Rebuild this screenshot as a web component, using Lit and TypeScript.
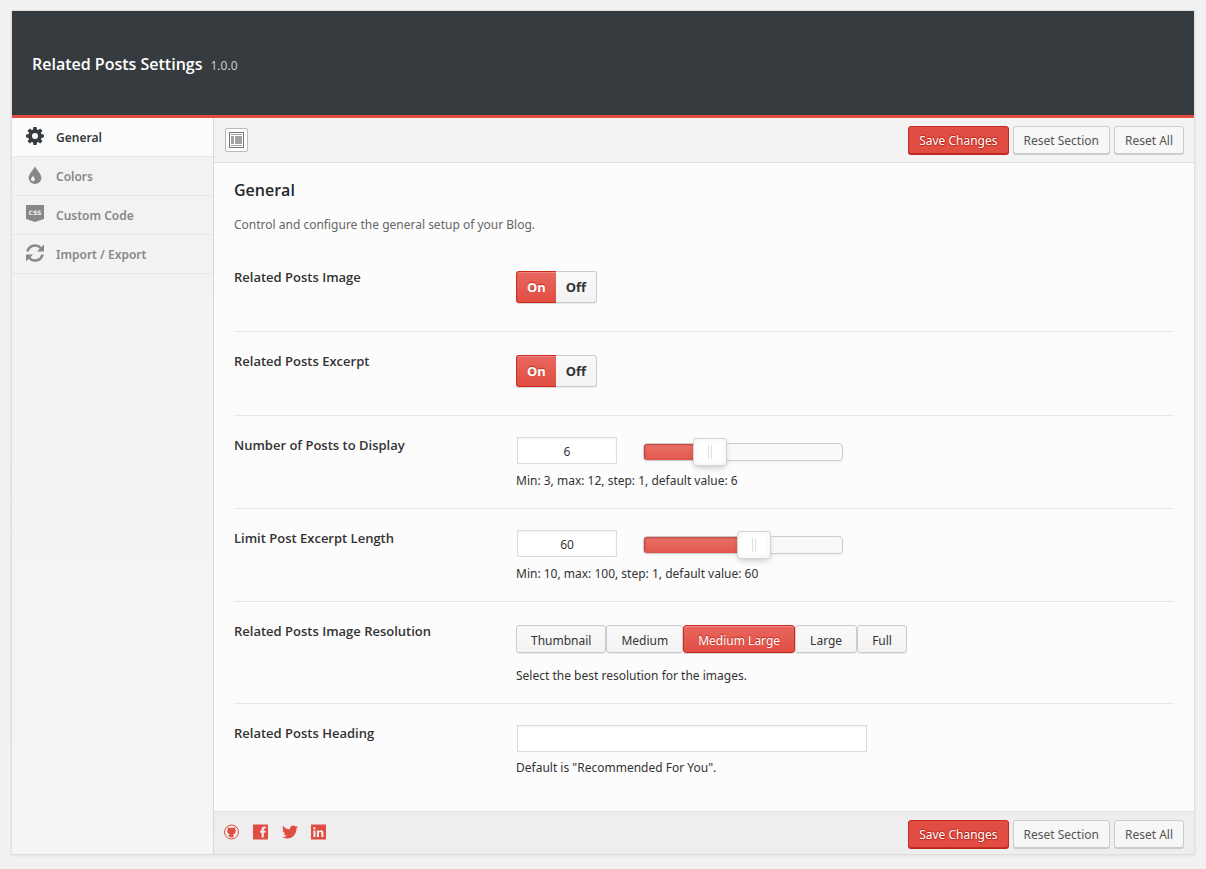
import { LitElement, html, css, svg } from "lit";
import { customElement, property, state } from "lit/decorators.js";
import { classMap } from "lit/directives/class-map.js";
import { styleMap } from "lit/directives/style-map.js";

const cog = svg`
  <svg viewBox="0 0 18 18" width="18" height="18" aria-hidden="true">
    <circle cx="9" cy="9" r="4.9" fill="none" stroke="currentColor" stroke-width="3.8" />
    ${[0, 45, 90, 135, 180, 225, 270, 315].map(
      (angle) => svg`<path d="M7.4 0.1h3.2l0.5 3.4h-4.2z" fill="currentColor" transform="rotate(${angle} 9 9)" />`
    )}
  </svg>`;

const drop = svg`
  <svg viewBox="0 0 18 18" width="18" height="18" aria-hidden="true">
    <path fill="currentColor" fill-rule="evenodd" d="M9 0C9.6 3.2 15.4 7.6 15.4 12A6.4 6 0 0 1 2.600 12C2.600 7.600 8.400 3.200 9 0zM6.900 9.800C6.600 11 5 11.900 5 13.300A1.950 1.950 0 0 0 8.900 13.300C8.900 11.900 7.200 11 6.900 9.800z" />
  </svg>`;

const cssBadge = svg`
  <svg viewBox="0 0 18 18" width="18" height="18" aria-hidden="true">
    <path fill="currentColor" d="M0 0h18v14l-9 3-9-3z" />
    <text class="badge-text" x="9" y="10" text-anchor="middle">CSS</text>
  </svg>`;

const refresh = svg`
  <svg viewBox="0 0 18 18" width="18" height="18" aria-hidden="true">
    <g fill="none" stroke="currentColor" stroke-width="2.6">
      <path d="M1.500 7.600A7.700 7.700 0 0 1 14.800 4.100" />
      <path d="M16.500 10.400A7.700 7.700 0 0 1 3.200 13.900" />
    </g>
    <path fill="currentColor" d="M18 0.600v7h-7zM0 17.400v-7h7z" />
  </svg>`;

const github = svg`
  <svg viewBox="0 0 16 16" width="16" height="16" aria-hidden="true">
    <circle cx="7.500" cy="8" r="7" fill="none" stroke="currentColor" stroke-width="1" />
    <path fill="currentColor" d="M3.900 3.200c.8 0 1.400.3 1.900.8a7 7 0 0 1 3.400 0c.5-.5 1.100-.8 1.900-.8.3.700.300 1.400.1 2 .4.600.5 1.200.5 1.800 0 2-1 3-2.600 3.300.3.300.4.700.4 1.100v1.900H5.500v-1.200c-1 .2-1.600-.4-2.100-1.100.9 0 1.300.6 2.100.4 0-.4.100-.8.400-1.100-1.600-.3-2.600-1.300-2.600-3.300 0-.6.100-1.200.5-1.800-.2-.6-.2-1.300.1-2z" />
  </svg>`;

const facebook = svg`
  <svg viewBox="0 0 16 16" width="16" height="16" aria-hidden="true">
    <path fill="currentColor" d="M0 .5h15v15H0z" />
    <path fill="#eee" d="M8.600 13.500V8.700H7V6.700h1.600V5.300c0-1.900 1-2.800 2.600-2.800h1.600v2h-1c-.8 0-1 .3-1 1v1.200h1.900l-.3 2h-1.600v4.800z" />
  </svg>`;

const twitter = svg`
  <svg viewBox="0 0 24 24" width="16" height="16" aria-hidden="true">
    <path fill="currentColor" d="M23.950 4.570a10 10 0 0 1-2.820.770 4.960 4.960 0 0 0 2.160-2.720c-.950.550-2 .960-3.130 1.180a4.920 4.920 0 0 0-8.380 4.480C7.690 8.100 4.070 6.130 1.640 3.160a4.820 4.820 0 0 0-.670 2.480c0 1.710.870 3.210 2.190 4.100a4.900 4.900 0 0 1-2.230-.620v.060a4.920 4.920 0 0 0 3.950 4.830 5 5 0 0 1-2.210.080 4.940 4.940 0 0 0 4.600 3.420A9.870 9.870 0 0 1 0 19.540a13.990 13.990 0 0 0 7.550 2.210c9.050 0 14-7.500 14-13.980 0-.210 0-.420-.020-.630a9.940 9.940 0 0 0 2.460-2.550z" />
  </svg>`;

const linkedin = svg`
  <svg viewBox="0 0 16 16" width="16" height="16" aria-hidden="true">
    <path fill="currentColor" fill-rule="evenodd" d="M0 .5h15v15H0zM2.400 6.400v6.600h2.100V6.400zM2.200 4.200a1.200 1.200 0 1 0 2.400 0 1.200 1.200 0 1 0-2.400 0zM5.900 6.400v6.600h2.100V9.500c0-.9.300-1.500 1.200-1.500.8 0 1.100.6 1.100 1.500v3.500h2.200V9.100c0-1.900-.9-2.900-2.400-2.900-1.100 0-1.700.5-2.100 1.100v-.9z" />
  </svg>`;

const layout = svg`
  <svg viewBox="0 0 15 16" width="15" height="16" aria-hidden="true">
    <rect x="0.500" y="0.500" width="14" height="15" fill="#fff" stroke="#777" />
    <path fill="#a3a3a3" d="M2 2h11v1H2zM2 4h3v8H2zM6 4h7v8H6zM2 13h11v1H2z" />
  </svg>`;

const focusRing = css`
  :focus-visible {
    outline: 2px solid #6ba4d8;
    outline-offset: 1px;
  }
`;

@customElement("action-bar")
class ActionBar extends LitElement {
  static styles = [
    focusRing,
    css`
      :host {
        display: flex;
        gap: 4px;
        margin-left: auto;
      }
      .button {
        box-sizing: border-box;
        height: 28px;
        padding: 1px 10px 0;
        border: 1px solid #ccc;
        border-radius: 3px;
        background: #f7f7f7;
        box-shadow: 0 1px 0 #ccc;
        color: #555;
        font: inherit;
        white-space: nowrap;
        cursor: pointer;
      }
      .primary {
        border-color: #c52b21;
        background: #e14d43;
        box-shadow: 0 1px 0 #ba281e;
        color: #fff;
        text-shadow: 0 -1px 1px #ba281e, 1px 0 1px #ba281e, 0 1px 1px #ba281e;
      }
    `,
  ];

  render() {
    return html`
      <button class="button primary" type="button">Save Changes</button>
      <button class="button" type="button">Reset Section</button>
      <button class="button" type="button">Reset All</button>
    `;
  }
}

@customElement("choice-set")
class ChoiceSet extends LitElement {
  static styles = [
    focusRing,
    css`
      :host {
        display: block;
      }
      .group {
        display: flex;
        flex-wrap: wrap;
        margin: 3px 0 0;
        padding: 0;
        border: 0;
        min-width: 0;
      }
      .choice {
        box-sizing: border-box;
        position: relative;
        height: 28px;
        padding: 0 14px;
        border: 1px solid #ccc;
        border-radius: 3px;
        background: linear-gradient(#f9f9f9, #f3f3f3);
        box-shadow: 0 1px 0 rgba(0, 0, 0, 0.08);
        color: #333;
        line-height: 30px;
        white-space: nowrap;
        cursor: pointer;
      }
      .radio {
        appearance: none;
        position: absolute;
        inset: 0;
        margin: 0;
        cursor: pointer;
      }
      .selected {
        border-color: #cf2a20;
        background: linear-gradient(#e8685f, #e14d43);
        box-shadow: inset 0 1px 0 #ec8a83, 0 1px 0 rgba(0, 0, 0, 0.15);
        color: #fff;
        text-shadow: 0 -1px 1px #ba281e;
      }
      .toggle .choice {
        height: 32px;
        padding: 0 10px;
        border-left-width: 0;
        border-radius: 0 3px 3px 0;
        font-size: 13px;
        font-weight: 700;
      }
      .toggle .choice:first-child {
        border-left-width: 1px;
        border-right-width: 0;
        border-radius: 3px 0 0 3px;
      }
      .toggle {
        margin-bottom: 10px;
      }
    `,
  ];

  @property() name = "";
  @property() label = "";
  @property({ type: Boolean }) toggle = false;
  @property({ attribute: false }) options: string[] = [];
  @property() value = "";

  render() {
    return html`
      <fieldset class=${classMap({ group: true, toggle: this.toggle })} aria-label=${this.label}>
        ${this.options.map(
          (option) => html`
            <label class=${classMap({ choice: true, selected: option === this.value })}>
              <input
                class="radio"
                type="radio"
                name=${this.name}
                .checked=${option === this.value}
                @change=${() => (this.value = option)}
              />${option}
            </label>
          `
        )}
      </fieldset>
    `;
  }
}

@customElement("slider-field")
class SliderField extends LitElement {
  static styles = [
    focusRing,
    css`
      :host {
        display: flex;
        gap: 26px;
        align-items: flex-start;
        height: 29px;
      }
      .number {
        box-sizing: border-box;
        width: 100px;
        height: 27px;
        margin: 1px;
        padding: 1px 5px 0;
        border: 1px solid #ddd;
        background: #fff;
        box-shadow: inset 0 1px 2px rgba(0, 0, 0, 0.07);
        color: #32373c;
        font: inherit;
        text-align: center;
      }
      .slider {
        display: grid;
        align-items: center;
        width: 200px;
        height: 28px;
        padding-top: 2px;
        margin-left: -1px;
      }
      .track,
      .range {
        grid-area: 1 / 1;
      }
      .track {
        box-sizing: border-box;
        height: 18px;
        border: 1px solid #ccc;
        border-radius: 4px;
        background: #f9f9f9;
        box-shadow: 0 2px 3px rgba(0, 0, 0, 0.04);
        overflow: hidden;
      }
      .fill {
        height: 100%;
        background: linear-gradient(#e8726a, #e2574d);
        box-shadow: inset 1px 1px 2px #b8423a;
      }
      .range {
        appearance: none;
        width: 234px;
        height: 28px;
        margin: 0 -17px;
        background: none;
        cursor: pointer;
      }
      .range::-webkit-slider-thumb {
        appearance: none;
        box-sizing: border-box;
        width: 34px;
        height: 28px;
        border: 1px solid #d5d5d5;
        border-radius: 3px;
        background:
          linear-gradient(#e0e0e0, #e0e0e0) 14px 6px / 1px 14px no-repeat,
          linear-gradient(#e0e0e0, #e0e0e0) 17px 6px / 1px 14px no-repeat,
          #fff;
        box-shadow: inset 0 0 6px #eee, 0 3px 6px -2px rgba(0, 0, 0, 0.25);
      }
    `,
  ];

  @property() label = "";
  @property({ type: Number }) min = 0;
  @property({ type: Number }) max = 100;
  @property({ type: Number }) value = 0;

  private setValue(event: Event) {
    const next = Number((event.target as HTMLInputElement).value);
    this.value = Math.min(this.max, Math.max(this.min, next));
  }

  render() {
    const share = ((this.value - this.min) / (this.max - this.min)) * 100;
    return html`
      <input
        class="number"
        type="text"
        inputmode="numeric"
        aria-label=${this.label}
        .value=${String(this.value)}
        @change=${this.setValue}
      />
      <div class="slider">
        <div class="track"><div class="fill" style=${styleMap({ width: `${share}%` })}></div></div>
        <input
          class="range"
          type="range"
          aria-label=${`${this.label} slider`}
          min=${this.min}
          max=${this.max}
          step="1"
          .value=${String(this.value)}
          @input=${this.setValue}
        />
      </div>
    `;
  }
}

const sections = [
  { name: "General", icon: cog },
  { name: "Colors", icon: drop },
  { name: "Custom Code", icon: cssBadge },
  { name: "Import / Export", icon: refresh },
];

const socials = [
  { name: "GitHub", icon: github },
  { name: "Facebook", icon: facebook },
  { name: "Twitter", icon: twitter },
  { name: "LinkedIn", icon: linkedin },
];

@customElement("app-root")
class AppRoot extends LitElement {
  static styles = [
    focusRing,
    css`
      :host {
        display: block;
        box-sizing: border-box;
        min-height: 100vh;
        padding: 10px 11px 14px;
        background: #f1f1f1;
        color: #333;
        font: 12px/18px "Noto Sans", "Open Sans", sans-serif;
      }
      .panel {
        border: 1px solid #dedede;
        box-shadow: 0 1px 3px rgba(0, 0, 0, 0.06);
        background: #f4f4f4;
      }
      .header {
        display: flex;
        align-items: baseline;
        gap: 8px;
        padding: 41px 20px 39px;
        border-bottom: 3px solid #e14d43;
        background: #363b3f;
        color: #fff;
      }
      .title {
        margin: 0;
        font-family: "Open Sans", "Noto Sans", sans-serif;
        font-size: 16px;
        font-weight: 600;
        line-height: 24px;
      }
      .version {
        color: #ccc;
      }
      .body {
        display: grid;
        grid-template-columns: 201px minmax(0, 1fr);
      }
      .sidebar {
        background: linear-gradient(#f2f2f2, #f5f5f5);
      }
      .nav {
        display: flex;
        flex-direction: column;
      }
      .nav-item {
        display: flex;
        align-items: flex-start;
        gap: 12px;
        height: 29px;
        padding: 9px 14px 0;
        border-bottom: 1px solid #e7e7e7;
        color: #888;
        font-weight: 600;
        line-height: 22px;
        text-decoration: none;
      }
      .active {
        background: #fcfcfc;
        color: #363b3f;
      }
      .nav-item svg {
        flex: none;
      }
      .badge-text {
        fill: #f3f3f3;
        font: 700 6px "DejaVu Sans", sans-serif;
      }
      .main {
        border-left: 1px solid #d8d8d8;
        background: #fcfcfc;
      }
      .toolbar,
      .footer {
        display: flex;
        align-items: flex-start;
        padding: 8px 10px;
      }
      .toolbar {
        border-bottom: 1px solid #dedede;
        background: #f3f3f3;
      }
      .footer {
        padding-bottom: 6px;
        border-top: 1px solid #e0e0e0;
        background: #eee;
      }
      .expand {
        display: grid;
        box-sizing: border-box;
        place-items: center;
        width: 23px;
        height: 24px;
        margin: 2px 1px 0;
        padding: 0;
        border: 1px solid #bbb;
        border-radius: 2px;
        background: #fcfcfc;
        cursor: pointer;
      }
      .content {
        padding: 15px 20px;
      }
      .heading {
        margin: 0;
        color: #23282d;
        font-family: "Open Sans", "Noto Sans", sans-serif;
        font-size: 16px;
        font-weight: 600;
        line-height: 24px;
      }
      .intro {
        margin: 14px 0;
        color: #666;
      }
      .row {
        display: grid;
        grid-template-columns: 30% minmax(0, 1fr);
        padding: 20px 0 18px;
        border-bottom: 1px solid #e7e7e7;
      }
      .row:last-child {
        padding-bottom: 19px;
        border-bottom: 0;
      }
      .label {
        font-family: "Open Sans", "Noto Sans", sans-serif;
        font-size: 13px;
        font-weight: 600;
      }
      .hint {
        margin: 7px 0 0;
      }
      .spaced {
        margin-top: 14px;
      }
      .text {
        display: block;
        box-sizing: border-box;
        width: 350px;
        max-width: 100%;
        height: 27px;
        margin: 1px;
        padding: 3px 5px;
        border: 1px solid #ddd;
        background: #fff;
        box-shadow: inset 0 1px 2px rgba(0, 0, 0, 0.07);
        color: #32373c;
        font: inherit;
      }
      .socials {
        display: flex;
        gap: 13px;
        padding-top: 4px;
      }
      .social {
        display: block;
        height: 16px;
        color: #e14d43;
      }
      .social svg {
        display: block;
      }
    `,
  ];

  @state() private active = "General";

  render() {
    return html`
      <div class="panel">
        <header class="header">
          <h1 class="title">Related Posts Settings</h1>
          <span class="version">1.0.0</span>
        </header>
        <div class="body">
          <aside class="sidebar">
            <nav class="nav">
              ${sections.map(
                (section) => html`
                  <a
                    class=${classMap({ "nav-item": true, active: section.name === this.active })}
                    href="#"
                    @click=${(event: Event) => {
                      event.preventDefault();
                      this.active = section.name;
                    }}
                    >${section.icon}<span>${section.name}</span></a
                  >
                `
              )}
            </nav>
          </aside>
          <main class="main">
            <div class="toolbar">
              <button class="expand" type="button" aria-label="Expand options">${layout}</button>
              <action-bar></action-bar>
            </div>
            <div class="content">
              <h2 class="heading">General</h2>
              <p class="intro">Control and configure the general setup of your Blog.</p>
              <div class="row">
                <div class="label">Related Posts Image</div>
                <choice-set
                  toggle
                  name="image"
                  label="Related Posts Image"
                  .options=${["On", "Off"]}
                  value="On"
                ></choice-set>
              </div>
              <div class="row">
                <div class="label">Related Posts Excerpt</div>
                <choice-set
                  toggle
                  name="excerpt"
                  label="Related Posts Excerpt"
                  .options=${["On", "Off"]}
                  value="On"
                ></choice-set>
              </div>
              <div class="row">
                <div class="label">Number of Posts to Display</div>
                <div>
                  <slider-field label="Number of Posts to Display" min="3" max="12" value="6"></slider-field>
                  <p class="hint">Min: 3, max: 12, step: 1, default value: 6</p>
                </div>
              </div>
              <div class="row">
                <div class="label">Limit Post Excerpt Length</div>
                <div>
                  <slider-field label="Limit Post Excerpt Length" min="10" max="100" value="60"></slider-field>
                  <p class="hint">Min: 10, max: 100, step: 1, default value: 60</p>
                </div>
              </div>
              <div class="row">
                <div class="label">Related Posts Image Resolution</div>
                <div>
                  <choice-set
                    name="resolution"
                    label="Related Posts Image Resolution"
                    .options=${["Thumbnail", "Medium", "Medium Large", "Large", "Full"]}
                    value="Medium Large"
                  ></choice-set>
                  <p class="hint spaced">Select the best resolution for the images.</p>
                </div>
              </div>
              <div class="row">
                <label class="label" for="heading">Related Posts Heading</label>
                <div>
                  <input class="text" id="heading" type="text" />
                  <p class="hint">Default is "Recommended For You".</p>
                </div>
              </div>
            </div>
            <footer class="footer">
              <div class="socials">
                ${socials.map(
                  (social) => html`<a class="social" href="#" aria-label=${social.name}>${social.icon}</a>`
                )}
              </div>
              <action-bar></action-bar>
            </footer>
          </main>
        </div>
      </div>
    `;
  }
}
